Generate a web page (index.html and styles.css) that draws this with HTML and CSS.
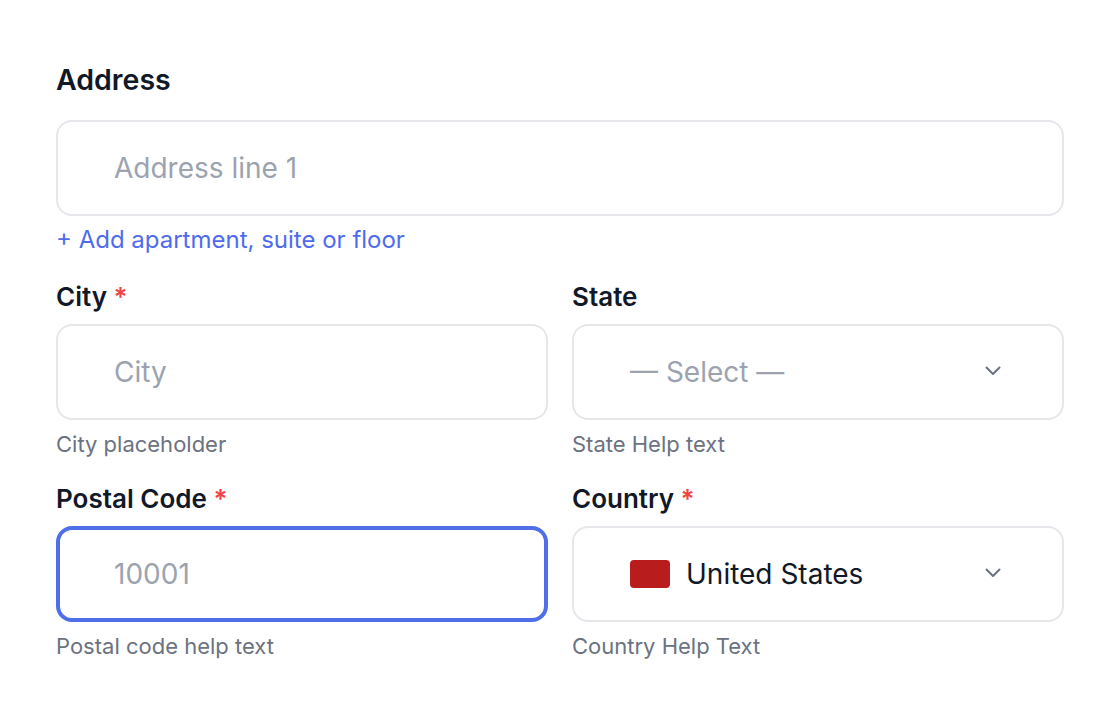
FILE: index.html
```html
<!DOCTYPE html>
<html lang="en">

<head>
    <meta charset="UTF-8">
    <meta name="viewport" content="width=device-width, initial-scale=1.0">
    <link rel="stylesheet" href="styles.css">
    <title>Address</title>
</head>

<body>
    <form class="addressForm">
        <div class="addressBlock">
            <label class="fieldLabel addressLabel">Address</label>
            <input class="textInput" type="text" placeholder="Address line 1">
            <a class="addLine" href="#">+ Add apartment, suite or floor</a>
        </div>

        <div class="fieldGrid">
            <div class="field">
                <label class="fieldLabel">City <span class="required">*</span></label>
                <input class="textInput" type="text" placeholder="City">
                <div class="helpText">City placeholder</div>
            </div>
            <div class="field">
                <label class="fieldLabel">State</label>
                <div class="selectBox">
                    <span class="selectPlaceholder">— Select —</span>
                    <svg class="chevron" viewBox="0 0 16 10" fill="none">
                        <path d="M1.5 1.5l6.5 6.5 6.5-6.5" stroke="#6b7280" stroke-width="2" stroke-linecap="round" stroke-linejoin="round" />
                    </svg>
                </div>
                <div class="helpText">State Help text</div>
            </div>
            <div class="field">
                <label class="fieldLabel">Postal Code <span class="required">*</span></label>
                <input class="textInput focused" type="text" placeholder="10001">
                <div class="helpText">Postal code help text</div>
            </div>
            <div class="field">
                <label class="fieldLabel">Country <span class="required">*</span></label>
                <div class="selectBox">
                    <span class="flag"></span>
                    <span class="selectValue">United States</span>
                    <svg class="chevron" viewBox="0 0 16 10" fill="none">
                        <path d="M1.5 1.5l6.5 6.5 6.5-6.5" stroke="#6b7280" stroke-width="2" stroke-linecap="round" stroke-linejoin="round" />
                    </svg>
                </div>
                <div class="helpText">Country Help Text</div>
            </div>
        </div>
    </form>
</body>

</html>
```

FILE: styles.css
```css
body {
    margin: 0;
    background-color: #fff;
    font-family: Inter, "Noto Sans", sans-serif;
    color: #111827;
}

.addressForm {
    padding: 64px 56px 0;
}

.addressBlock {
    display: flex;
    flex-direction: column;
    margin-bottom: 25px;
}

.fieldLabel {
    display: block;
    font-size: 26px;
    font-weight: 600;
    line-height: 32px;
    margin-bottom: 11px;
}

.addressLabel {
    font-size: 28.5px;
    margin-bottom: 24px;
}

.required {
    color: #ef4444;
}

.textInput,
.selectBox {
    box-sizing: border-box;
    width: 100%;
    height: 96px;
    border: 2px solid #e5e7eb;
    border-radius: 16px;
    background-color: #fff;
    font-family: inherit;
    font-size: 28px;
}

.textInput {
    display: block;
    padding: 0 56px;
    outline: none;
}

.textInput::placeholder {
    color: #9ca3af;
    opacity: 1;
}

.focused {
    border: 4px solid #4f6fe8;
    padding: 0 54px;
}

.addLine {
    font-size: 24px;
    line-height: 32px;
    margin-top: 8px;
    color: #4f6bed;
    text-decoration: none;
}

.fieldGrid {
    display: grid;
    grid-template-columns: 1fr 1fr;
    column-gap: 24px;
    row-gap: 23px;
}

.helpText {
    font-size: 22px;
    line-height: 32px;
    margin-top: 8px;
    color: #6b7280;
}

.selectBox {
    display: flex;
    align-items: center;
    padding: 0 61px 0 56px;
}

.selectPlaceholder {
    color: #9ca3af;
    flex: 1;
}

.selectValue {
    flex: 1;
}

.flag {
    width: 40px;
    height: 28px;
    border-radius: 4px;
    background-color: #b91c1c;
    margin-right: 16px;
}

.chevron {
    width: 16px;
    height: 10px;
    margin-top: -3px;
}
```
